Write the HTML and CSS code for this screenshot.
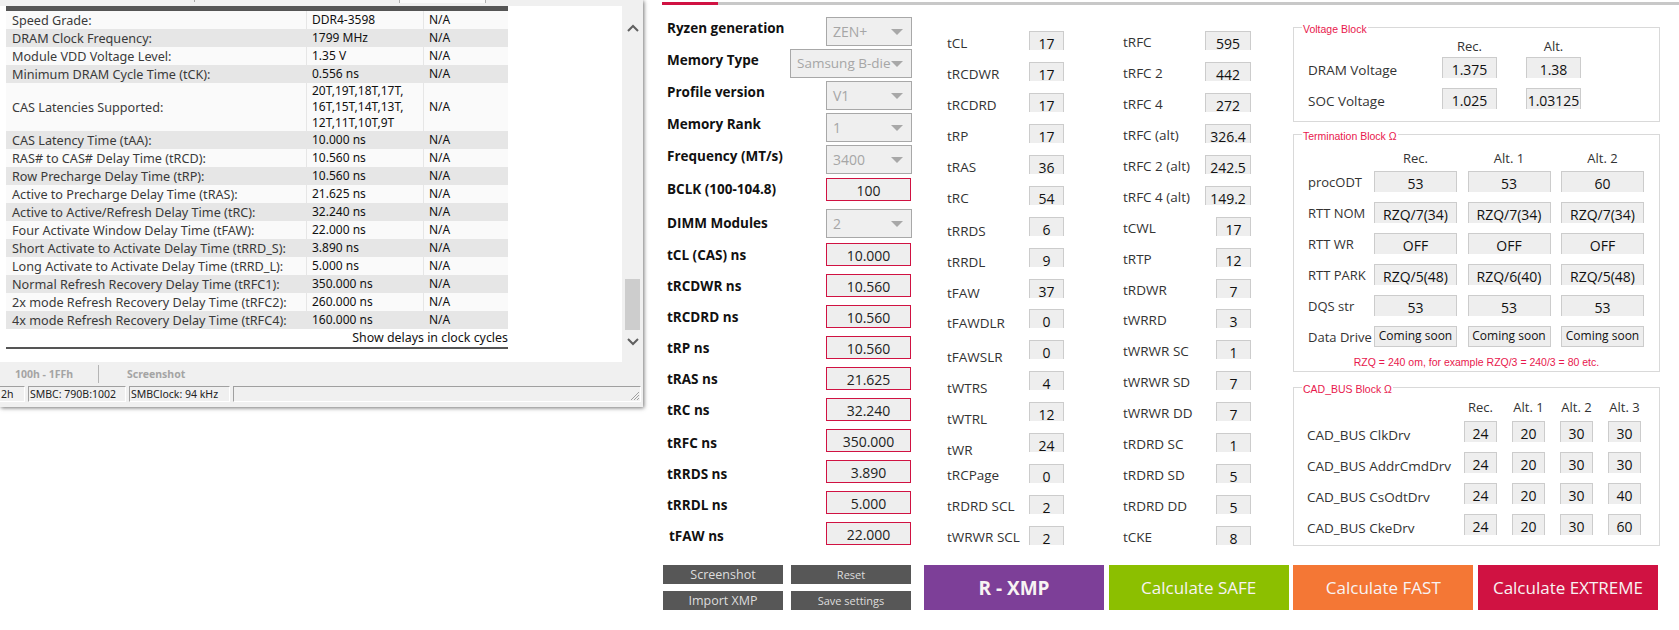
FILE: index.html
```html
<!DOCTYPE html>
<html lang="en">
<head>
<meta charset="utf-8">
<title>DRAM Calculator</title>
<link rel="stylesheet" href="styles.css">
</head>
<body>
<div class="page">
  <section class="window">
    <div class="tabstrip"><span class="tick t1"></span><span class="seltab"></span></div>
    <div class="upper">
      <div class="content">
        <table class="spd">
          <colgroup><col class="c1"><col class="c2"><col class="c3"></colgroup>
          <tr><td>Speed Grade:</td><td>DDR4-3598</td><td>N/A</td></tr>
          <tr><td>DRAM Clock Frequency:</td><td>1799 MHz</td><td>N/A</td></tr>
          <tr><td>Module VDD Voltage Level:</td><td>1.35 V</td><td>N/A</td></tr>
          <tr><td>Minimum DRAM Cycle Time (tCK):</td><td>0.556 ns</td><td>N/A</td></tr>
          <tr class="tall"><td>CAS Latencies Supported:</td><td>20T,19T,18T,17T,<br>16T,15T,14T,13T,<br>12T,11T,10T,9T</td><td>N/A</td></tr>
          <tr><td>CAS Latency Time (tAA):</td><td>10.000 ns</td><td>N/A</td></tr>
          <tr><td>RAS# to CAS# Delay Time (tRCD):</td><td>10.560 ns</td><td>N/A</td></tr>
          <tr><td>Row Precharge Delay Time (tRP):</td><td>10.560 ns</td><td>N/A</td></tr>
          <tr><td>Active to Precharge Delay Time (tRAS):</td><td>21.625 ns</td><td>N/A</td></tr>
          <tr><td>Active to Active/Refresh Delay Time (tRC):</td><td>32.240 ns</td><td>N/A</td></tr>
          <tr><td>Four Activate Window Delay Time (tFAW):</td><td>22.000 ns</td><td>N/A</td></tr>
          <tr><td>Short Activate to Activate Delay Time (tRRD_S):</td><td>3.890 ns</td><td>N/A</td></tr>
          <tr><td>Long Activate to Activate Delay Time (tRRD_L):</td><td>5.000 ns</td><td>N/A</td></tr>
          <tr><td>Normal Refresh Recovery Delay Time (tRFC1):</td><td>350.000 ns</td><td>N/A</td></tr>
          <tr><td>2x mode Refresh Recovery Delay Time (tRFC2):</td><td>260.000 ns</td><td>N/A</td></tr>
          <tr><td>4x mode Refresh Recovery Delay Time (tRFC4):</td><td>160.000 ns</td><td>N/A</td></tr>
        </table>
        <div class="showdelays">Show delays in clock cycles</div>
      </div>
      <div class="scrollbar">
        <svg class="chev" width="12" height="8" viewBox="0 0 12 8"><path d="M1 7 L6 2 L11 7" fill="none" stroke="#606060" stroke-width="2"/></svg>
        <div class="track"><div class="thumb"></div></div>
        <svg class="chev" width="12" height="8" viewBox="0 0 12 8"><path d="M1 1 L6 6 L11 1" fill="none" stroke="#606060" stroke-width="2"/></svg>
      </div>
    </div>
    <div class="tabbar"><span class="tb first">100h - 1FFh</span><span class="tb second">Screenshot</span></div>
    <div class="status">
      <span class="cell s0">2h</span>
      <span class="cell s1">SMBC: 790B:1002</span>
      <span class="cell s2">SMBClock: 94 kHz</span>
      <span class="cell s3"><svg class="grip" width="11" height="11" viewBox="0 0 11 11"><path d="M10 2 L2 10 M10 5 L5 10 M10 8 L8 10" stroke="#a0a0a0" stroke-width="1"/></svg></span>
    </div>
  </section>

  <section class="panel">
    <div class="tabline"><span class="tabred"></span><span class="tabgrey"></span></div>
    <div class="main">
      <div class="col-form">
        <div class="frow sr"><span class="flabel">Ryzen generation</span><span class="sel">ZEN+</span></div>
        <div class="frow sr"><span class="flabel">Memory Type</span><span class="sel wide">Samsung B-die</span></div>
        <div class="frow sr"><span class="flabel">Profile version</span><span class="sel">V1</span></div>
        <div class="frow sr"><span class="flabel">Memory Rank</span><span class="sel">1</span></div>
        <div class="frow sr"><span class="flabel">Frequency (MT/s)</span><span class="sel">3400</span></div>
        <div class="frow bclk"><span class="flabel">BCLK (100-104.8)</span><span class="inp">100</span></div>
        <div class="frow"><span class="flabel">DIMM Modules</span><span class="sel">2</span></div>
        <div class="frow ns"><span class="flabel">tCL (CAS) ns</span><span class="inp">10.000</span></div>
        <div class="frow ns"><span class="flabel">tRCDWR ns</span><span class="inp">10.560</span></div>
        <div class="frow ns"><span class="flabel">tRCDRD ns</span><span class="inp">10.560</span></div>
        <div class="frow ns"><span class="flabel">tRP ns</span><span class="inp">10.560</span></div>
        <div class="frow ns"><span class="flabel">tRAS ns</span><span class="inp">21.625</span></div>
        <div class="frow ns"><span class="flabel">tRC ns</span><span class="inp">32.240</span></div>
        <div class="frow ns lowf"><span class="flabel">tRFC ns</span><span class="inp">350.000</span></div>
        <div class="frow ns lowf"><span class="flabel">tRRDS ns</span><span class="inp">3.890</span></div>
        <div class="frow ns lowf"><span class="flabel">tRRDL ns</span><span class="inp">5.000</span></div>
        <div class="frow ns lowf"><span class="flabel indent">tFAW ns</span><span class="inp">22.000</span></div>
      </div>

      <div class="col-timing left">
        <div class="trow top"><span class="tl">tCL</span><span class="val">17</span></div>
        <div class="trow top"><span class="tl">tRCDWR</span><span class="val">17</span></div>
        <div class="trow top"><span class="tl">tRCDRD</span><span class="val">17</span></div>
        <div class="trow top"><span class="tl">tRP</span><span class="val">17</span></div>
        <div class="trow top"><span class="tl">tRAS</span><span class="val">36</span></div>
        <div class="trow top"><span class="tl">tRC</span><span class="val">54</span></div>
        <div class="trow"><span class="tl">tRRDS</span><span class="val">6</span></div>
        <div class="trow"><span class="tl">tRRDL</span><span class="val">9</span></div>
        <div class="trow"><span class="tl">tFAW</span><span class="val">37</span></div>
        <div class="trow"><span class="tl">tFAWDLR</span><span class="val">0</span></div>
        <div class="trow low"><span class="tl">tFAWSLR</span><span class="val">0</span></div>
        <div class="trow low"><span class="tl">tWTRS</span><span class="val">4</span></div>
        <div class="trow low"><span class="tl">tWTRL</span><span class="val">12</span></div>
        <div class="trow low"><span class="tl">tWR</span><span class="val">24</span></div>
        <div class="trow up"><span class="tl">tRCPage</span><span class="val">0</span></div>
        <div class="trow up"><span class="tl">tRDRD SCL</span><span class="val">2</span></div>
        <div class="trow up"><span class="tl">tWRWR SCL</span><span class="val">2</span></div>
      </div>

      <div class="col-timing right">
        <div class="trow mid"><span class="tl">tRFC</span><span class="val big">595</span></div>
        <div class="trow mid"><span class="tl">tRFC 2</span><span class="val big">442</span></div>
        <div class="trow mid"><span class="tl">tRFC 4</span><span class="val big">272</span></div>
        <div class="trow mid"><span class="tl">tRFC (alt)</span><span class="val big">326.4</span></div>
        <div class="trow mid"><span class="tl">tRFC 2 (alt)</span><span class="val big">242.5</span></div>
        <div class="trow mid"><span class="tl">tRFC 4 (alt)</span><span class="val big">149.2</span></div>
        <div class="trow up"><span class="tl">tCWL</span><span class="val">17</span></div>
        <div class="trow up"><span class="tl">tRTP</span><span class="val">12</span></div>
        <div class="trow up"><span class="tl">tRDWR</span><span class="val">7</span></div>
        <div class="trow up"><span class="tl">tWRRD</span><span class="val">3</span></div>
        <div class="trow up"><span class="tl">tWRWR SC</span><span class="val">1</span></div>
        <div class="trow up"><span class="tl">tWRWR SD</span><span class="val">7</span></div>
        <div class="trow up"><span class="tl">tWRWR DD</span><span class="val">7</span></div>
        <div class="trow up"><span class="tl">tRDRD SC</span><span class="val">1</span></div>
        <div class="trow up"><span class="tl">tRDRD SD</span><span class="val">5</span></div>
        <div class="trow up"><span class="tl">tRDRD DD</span><span class="val">5</span></div>
        <div class="trow up"><span class="tl">tCKE</span><span class="val">8</span></div>
      </div>

      <div class="col-blocks">
        <div class="block volt">
          <span class="legend">Voltage Block</span>
          <div class="vgrid">
            <span></span><span class="hd">Rec.</span><span class="hd">Alt.</span>
            <span class="bl">DRAM Voltage</span><span class="box">1.375</span><span class="box">1.38</span>
            <span class="bl">SOC Voltage</span><span class="box">1.025</span><span class="box">1.03125</span>
          </div>
        </div>
        <div class="block term">
          <span class="legend">Termination Block Ω</span>
          <div class="tgrid">
            <span></span><span class="hd">Rec.</span><span class="hd">Alt. 1</span><span class="hd">Alt. 2</span>
            <span class="bl">procODT</span><span class="box">53</span><span class="box">53</span><span class="box">60</span>
            <span class="bl">RTT NOM</span><span class="box">RZQ/7(34)</span><span class="box">RZQ/7(34)</span><span class="box">RZQ/7(34)</span>
            <span class="bl">RTT WR</span><span class="box">OFF</span><span class="box">OFF</span><span class="box">OFF</span>
            <span class="bl">RTT PARK</span><span class="box">RZQ/5(48)</span><span class="box">RZQ/6(40)</span><span class="box">RZQ/5(48)</span>
            <span class="bl">DQS str</span><span class="box">53</span><span class="box">53</span><span class="box">53</span>
            <span class="bl">Data Drive</span><span class="box soon">Coming soon</span><span class="box soon">Coming soon</span><span class="box soon">Coming soon</span>
          </div>
          <p class="note">RZQ = 240 om, for example RZQ/3 = 240/3 = 80 etc.</p>
        </div>
        <div class="block cad">
          <span class="legend">CAD_BUS Block Ω</span>
          <div class="cgrid">
            <span></span><span class="hd">Rec.</span><span class="hd">Alt. 1</span><span class="hd">Alt. 2</span><span class="hd">Alt. 3</span>
            <span class="bl">CAD_BUS ClkDrv</span><span class="box">24</span><span class="box">20</span><span class="box">30</span><span class="box">30</span>
            <span class="bl">CAD_BUS AddrCmdDrv</span><span class="box">24</span><span class="box">20</span><span class="box">30</span><span class="box">30</span>
            <span class="bl">CAD_BUS CsOdtDrv</span><span class="box">24</span><span class="box">20</span><span class="box">30</span><span class="box">40</span>
            <span class="bl">CAD_BUS CkeDrv</span><span class="box">24</span><span class="box">20</span><span class="box">30</span><span class="box">60</span>
          </div>
        </div>
      </div>
    </div>

    <div class="footer">
      <div class="smallbtns">
        <button class="sbtn">Screenshot</button>
        <button class="sbtn tiny">Reset</button>
        <button class="sbtn">Import XMP</button>
        <button class="sbtn tiny">Save settings</button>
      </div>
      <div class="bigbtns">
        <button class="bbtn purple">R - XMP</button>
        <button class="bbtn green">Calculate SAFE</button>
        <button class="bbtn orange">Calculate FAST</button>
        <button class="bbtn red">Calculate EXTREME</button>
      </div>
    </div>
  </section>
</div>
</body>
</html>
```

FILE: styles.css
```css
* { box-sizing: border-box; }
html, body { margin: 0; padding: 0; background: #fff; }
body { width: 1679px; height: 630px; overflow: hidden; font-family: "Open Sans", sans-serif; color: #222; }
.page { display: flex; align-items: flex-start; height: 630px; }

/* left window */
.window { width: 643px; height: 407px; flex: none; background: #f0f0f0; position: relative; z-index: 1; box-shadow: 1px 1px 4px rgba(0,0,0,.55); font-family: "Noto Sans", sans-serif; padding-bottom: 5px; }
.tabstrip { height: 6px; position: relative; }
.tick { position: absolute; top: 0; width: 1px; height: 2px; background: #a8a8a8; }
.t1 { left: 194px; }
.seltab { position: absolute; left: 399px; top: 0; width: 87px; height: 3px; background: #fafafa; border-left: 1px solid #b0b0b0; border-right: 1px solid #b0b0b0; }
.upper { display: flex; height: 356px; }
.content { width: 622px; background: #fff; padding-left: 6px; }
.spd { width: 502px; border-collapse: separate; border-spacing: 0; table-layout: fixed; border-top: 5px solid #555; font-size: 12.65px; color: #3a3a3a; }
.c1 { width: 300px; } .c2 { width: 117px; } .c3 { width: 85px; }
.spd td { height: 18px; padding: 0 0 0 6px; line-height: 16px; white-space: nowrap; }
.spd td + td { color: #111; font-size: 12px; padding-left: 5px; border-left: 1px solid #e6e6e6; }
.spd tr:nth-child(odd) { background: #fafafa; }
.spd tr:nth-child(even) { background: #e6e6e6; }
.spd .tall td { height: 48px; }
.showdelays { width: 502px; height: 20px; line-height: 18px; text-align: right; font-size: 12.4px; color: #111; border-bottom: 2px solid #555; }
.scrollbar { flex: 1; display: flex; flex-direction: column; align-items: center; padding: 18px 0 0; }
.chev { flex: none; }
.track { width: 15px; height: 306px; padding-top: 247px; }
.thumb { height: 51px; background: #cdcdcd; }
.tabbar { height: 24px; display: flex; align-items: center; font-size: 10.5px; font-weight: 700; color: #a4a4a4; }
.tb { display: block; }
.first { padding-left: 15px; width: 99px; height: 18px; line-height: 18px; border-right: 1px solid #b5b5b5; }
.second { padding-left: 28px; }
.status { height: 16px; display: flex; gap: 3px; font-size: 10.5px; color: #222; }
.cell { display: block; border-top: 1px solid #a0a0a0; border-left: 1px solid #a0a0a0; line-height: 15px; padding-left: 1px; white-space: nowrap; border-bottom: 1px solid #fff; border-right: 1px solid #fff; position: relative; }
.s0 { width: 25px; border-left: none; }
.s1 { width: 98px; }
.s2 { width: 101px; }
.s3 { flex: 1; margin-right: 2px; }
.grip { position: absolute; right: 0; bottom: 0; }

/* right panel */
.panel { flex: 1; padding-top: 2px; height: 630px; background: #fff; }
.tabline { display: flex; height: 3px; padding-left: 19px; }
.tabred { width: 56px; background: #d01242; }
.tabgrey { flex: 1; background: #c8c8c8; }
.main { display: flex; height: 560px; padding-left: 19px; }

.col-form { width: 250px; padding-top: 10px; }
.frow { height: 32px; display: flex; align-items: center; justify-content: space-between; }
.frow.ns { height: 31px; }
.flabel { padding-left: 5px; font-size: 13.5px; font-weight: 700; color: #111; white-space: nowrap; }
.frow.sr .flabel { margin-bottom: 7px; }
.frow.lowf .flabel { margin-top: 4px; }
.frow.bclk { align-items: flex-start; padding-top: 3px; }
.frow.bclk .flabel { margin-top: 2px; }
.indent { padding-left: 7px; }
.sel { width: 86px; height: 29px; border: 1px solid #a8a8a8; background: #efefef; color: #a6a6a6; font-size: 14px; line-height: 27px; padding-left: 6px; position: relative; }
.sel.wide { width: 122px; font-size: 13.5px; }
.sel::after { content: ""; position: absolute; right: 8px; top: 11px; border-left: 6px solid transparent; border-right: 6px solid transparent; border-top: 6px solid #a8a8a8; }
.inp { width: 85px; height: 23px; margin-right: 1px; border: 1px solid #d01242; background: #eee; color: #222; font-size: 14px; line-height: 23px; text-align: center; }

.col-timing { padding-top: 26px; display: grid; grid-auto-rows: 30.94px; }
.col-timing.left { width: 117px; margin-left: 35px; }
.col-timing.right { width: 128px; margin-left: 59px; }
.trow { display: flex; justify-content: space-between; align-items: flex-start; }
.tl { font-size: 13.5px; line-height: 20px; color: #333; margin-top: 4px; white-space: nowrap; }
.trow.top .tl { margin-top: 2px; }
.trow.low .tl { margin-top: 7px; }
.trow.mid .tl { margin-top: 1px; }
.trow.up .tl { margin-top: 1px; }
.val { width: 35px; height: 19px; border: 1px solid #ccc; border-bottom: none; background: #eee; color: #111; font-size: 14px; line-height: 24px; text-align: center; flex: none; }
.val.big { width: 46px; }

.col-blocks { width: 367px; margin-left: 42px; padding-top: 22px; }
.block { border: 1px solid #d9d9d9; position: relative; color: #333; }
.legend { position: absolute; left: 8px; top: -5px; padding: 0 1px; background: #fff; font-family: "Liberation Sans", sans-serif; font-size: 10.5px; line-height: 13px; color: #e8184d; white-space: nowrap; }
.volt { height: 95px; }
.term { height: 238px; margin-top: 12px; }
.cad { height: 159px; margin-top: 15px; }
.hd { font-size: 13px; text-align: center; align-self: end; color: #333; line-height: 18px; }
.bl { font-size: 13.5px; color: #333; line-height: 21px; white-space: nowrap; }
.box { height: 21px; border: 1px solid #ccc; border-bottom: none; background: #eee; font-size: 14px; line-height: 23px; color: #111; text-align: center; white-space: nowrap; }
.box.soon { border-bottom: 1px solid #ccc; font-size: 12px; line-height: 18px; }
.vgrid { display: grid; grid-template-columns: 105px 55px 55px; column-gap: 29px; grid-template-rows: 29px 31px 31px; padding: 0 0 0 14px; }
.vgrid .hd { padding-bottom: 2px; }
.vgrid .bl { margin-top: 3px; }
.tgrid { display: grid; grid-template-columns: 55.5px 83px 83px 83px; column-gap: 10.5px; grid-template-rows: 36px repeat(6, 31px); padding-left: 14px; }
.tgrid .hd { padding-bottom: 4px; }
.tgrid .bl { margin-top: 1px; font-size: 13px; }
.note { margin: -2px 0 0; text-align: center; font-family: "Liberation Sans", sans-serif; font-size: 10.5px; color: #e8184d; line-height: 14px; }
.cgrid { display: grid; grid-template-columns: 142px repeat(4, 33px); column-gap: 15px; grid-template-rows: 33px repeat(4, 31px); padding-left: 13px; }
.cgrid .hd { padding-bottom: 5px; }
.cgrid .bl { margin-top: 4px; }

.footer { display: flex; padding-left: 20px; }
.smallbtns { width: 248px; display: grid; grid-template-columns: 120px 120px; column-gap: 8px; row-gap: 7px; grid-auto-rows: 19px; }
.sbtn { border: none; padding: 0; background: #575757; color: #ddd; font-family: "Open Sans", sans-serif; font-size: 12.5px; line-height: 19px; }
.sbtn.tiny { font-size: 11px; }
.bigbtns { display: flex; gap: 4.67px; margin-left: 13px; }
.bbtn { width: 180px; height: 45px; border: none; padding: 0; color: #f8f3f3; font-family: "Open Sans", sans-serif; font-size: 17px; }
.purple { background: #7d3f98; font-weight: 700; font-size: 19px; }
.green { background: #8cbf00; }
.orange { background: #f47735; }
.red { background: #d01242; }
```
